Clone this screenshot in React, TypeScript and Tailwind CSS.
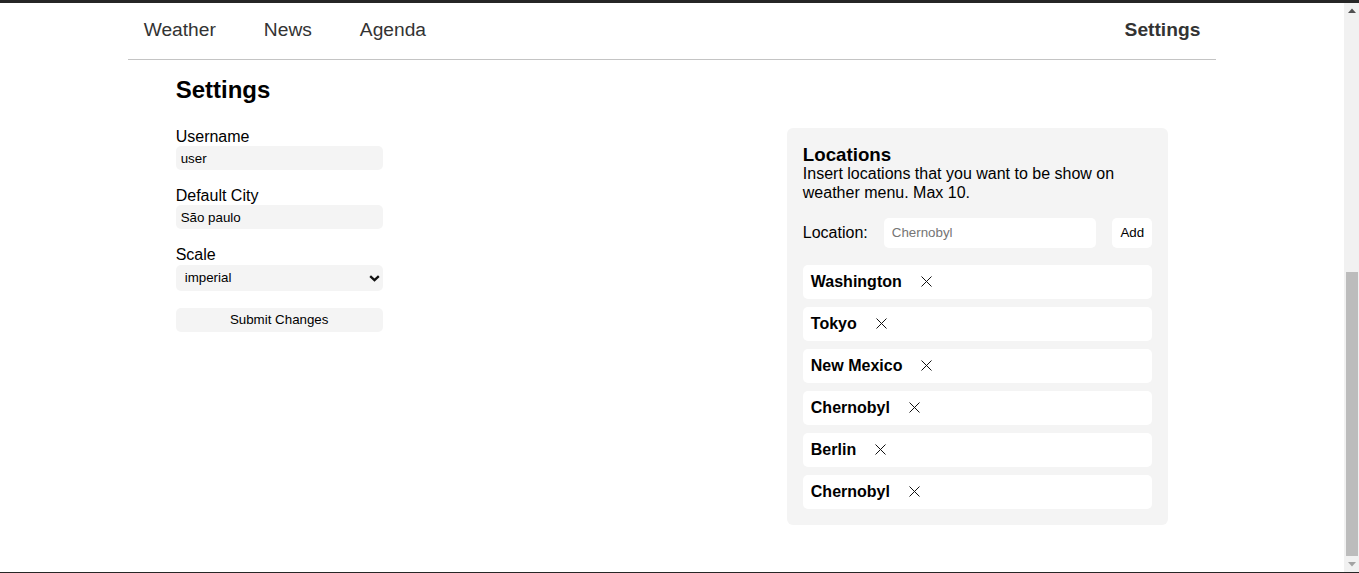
import React from "react";

function XIcon() {
  return (
    <svg width="11" height="11" viewBox="0 0 11 11" className="ml-[19px] shrink-0" aria-hidden>
      <line x1="0.5" y1="0.5" x2="10.5" y2="10.5" stroke="#111" strokeWidth="1" />
      <line x1="10.5" y1="0.5" x2="0.5" y2="10.5" stroke="#111" strokeWidth="1" />
    </svg>
  );
}

function Scrollbar() {
  return (
    <div className="w-[15px] shrink-0 bg-[#f1f1f1] flex flex-col" aria-hidden>
      <div className="h-[15px] flex items-center justify-center">
        <svg width="8" height="5" viewBox="0 0 8 5">
          <polygon points="0,5 8,5 4,0.5" fill="#505050" />
        </svg>
      </div>
      <div className="flex-1 flex flex-col pl-[2px] pr-px">
        <div className="h-[254px]" />
        <div className="h-[284px] bg-[#bcbcbc]" />
      </div>
      <div className="h-[15px] flex items-center justify-center">
        <svg width="8" height="5" viewBox="0 0 8 5">
          <polygon points="0,0 8,0 4,4.5" fill="#a3a3a3" />
        </svg>
      </div>
    </div>
  );
}

const locations = ["Washington", "Tokyo", "New Mexico", "Chernobyl", "Berlin", "Chernobyl"];

export default function App() {
  return (
    <div
      className="h-[573px] flex border-t-[3px] border-b border-[#262626] bg-white text-black"
      style={{ fontFamily: '"Liberation Sans", Arial, sans-serif' }}
    >
      <div className="flex-1 min-w-0 overflow-hidden">
        <div className="w-[81%] mx-auto pb-12">
          <nav className="flex border-b border-[#c4c4c4] px-4 pt-[16px] pb-[18px] text-[19.2px] leading-[22px] text-[#333]">
            <div className="flex gap-12">
              <a>Weather</a>
              <a>News</a>
              <a>Agenda</a>
            </div>
            <a className="ml-auto font-bold">Settings</a>
          </nav>

          <div className="px-12 pt-4">
            <h2 className="text-[24px] font-bold leading-[27.6px] mb-6">Settings</h2>
            <div className="flex justify-between items-start">
              <form className="w-[207px] flex flex-col" onSubmit={(e) => e.preventDefault()}>
                <div className="mb-[17px]">
                  <label className="block text-base leading-[18.4px]">Username</label>
                  <input
                    className="block h-6 w-full bg-[#f4f4f4] rounded-[5px] px-[5px] text-[13.33px] outline-none"
                    defaultValue="user"
                  />
                </div>
                <div className="mb-[17px]">
                  <label className="block text-base leading-[18.4px]">Default City</label>
                  <input
                    className="block h-6 w-full bg-[#f4f4f4] rounded-[5px] px-[5px] text-[13.33px] outline-none"
                    defaultValue="São paulo"
                  />
                </div>
                <div className="mb-[16.6px]">
                  <label className="block text-base leading-[18.4px]">Scale</label>
                  <div className="relative h-[26.5px]">
                    <select
                      className="appearance-none block w-full h-full bg-[#f4f4f4] rounded-[5px] pl-[9px] text-[13.33px] outline-none"
                      defaultValue="imperial"
                    >
                      <option value="imperial">imperial</option>
                      <option value="metric">metric</option>
                    </select>
                    <svg
                      width="11"
                      height="7"
                      viewBox="0 0 11 7"
                      className="absolute right-[2.5px] top-[10px] pointer-events-none"
                      aria-hidden
                    >
                      <polyline points="1.2,1.2 5.5,5.2 9.8,1.2" fill="none" stroke="#111" strokeWidth="2.3" />
                    </svg>
                  </div>
                </div>
                <button type="submit" className="h-6 w-full bg-[#f4f4f4] rounded-[5px] text-[13.33px]">
                  Submit Changes
                </button>
              </form>

              <div className="w-[381.5px] bg-[#f4f4f4] rounded-[6px] p-4">
                <h3 className="text-[18.72px] font-bold leading-[21.5px]">Locations</h3>
                <p className="text-base leading-[18.4px]">
                  Insert locations that you want to be show on weather menu. Max 10.
                </p>
                <div className="mt-4 flex items-center gap-4">
                  <label className="text-base leading-[18.4px]">Location:</label>
                  <input
                    className="flex-1 min-w-0 h-[30px] bg-white rounded-[5px] px-2 text-[13.33px] outline-none placeholder:text-[#757575]"
                    placeholder="Chernobyl"
                  />
                  <button className="h-[30px] w-10 bg-white rounded-[5px] text-[13.33px]">Add</button>
                </div>
                <ul className="mt-[17px] flex flex-col gap-2">
                  {locations.map((l, i) => (
                    <li key={i} className="h-[34px] bg-white rounded-[5px] px-2 flex items-center font-bold text-base">
                      <span>{l}</span>
                      <XIcon />
                    </li>
                  ))}
                </ul>
              </div>
            </div>
          </div>
        </div>
      </div>
      <Scrollbar />
    </div>
  );
}
